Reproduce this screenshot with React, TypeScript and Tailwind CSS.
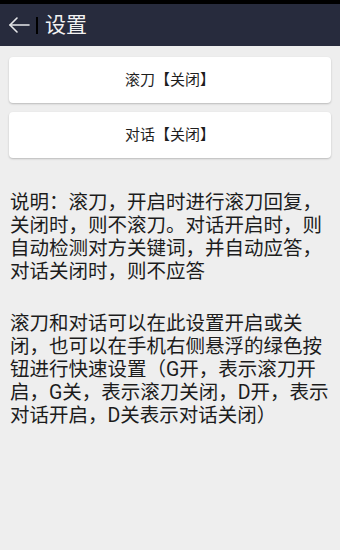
import React from "react";

export default function App() {
  return (
    <div className="w-[340px] h-[550px] bg-[#eeeeee] flex flex-col font-['Roboto','Noto_Sans_CJK_SC',sans-serif]">
      <div className="h-[4px] bg-black" />
      <div className="h-[42px] bg-[#272b3d] flex items-center">
        <svg width="22" height="18" viewBox="0 0 22 18" className="ml-[8px]" fill="none" stroke="#e6e7ea" strokeWidth="1.6" strokeLinecap="round" strokeLinejoin="round">
          <path d="M21 9H2" />
          <path d="M9 2L2 9l7 7" />
        </svg>
        <div className="w-[2px] h-[17px] bg-black ml-[6px]" />
        <div className="ml-[7px] text-[21px] text-[#f2f2f2] leading-none">设置</div>
      </div>
      <div className="px-[9px] pt-[11px] flex flex-col gap-[9px]">
        <div className="h-[46px] bg-white rounded-[4px] shadow-[0_1px_2px_rgba(0,0,0,0.22)] flex items-center justify-center text-[15px] text-[#1e1e1e]">
          滚刀【关闭】
        </div>
        <div className="h-[46px] bg-white rounded-[4px] shadow-[0_1px_2px_rgba(0,0,0,0.22)] flex items-center justify-center text-[15px] text-[#1e1e1e]">
          对话【关闭】
        </div>
      </div>
      <div className="px-[10px] pt-[33px] text-[19.5px] leading-[23px] text-[#1c1c1c]">
        <p>说明：滚刀，开启时进行滚刀回复，关闭时，则不滚刀。对话开启时，则自动检测对方关键词，并自动应答，对话关闭时，则不应答</p>
        <p className="mt-[29px]">滚刀和对话可以在此设置开启或关闭，也可以在手机右侧悬浮的绿色按钮进行快速设置（G开，表示滚刀开启，G关，表示滚刀关闭，D开，表示对话开启，D关表示对话关闭）</p>
      </div>
    </div>
  );
}
